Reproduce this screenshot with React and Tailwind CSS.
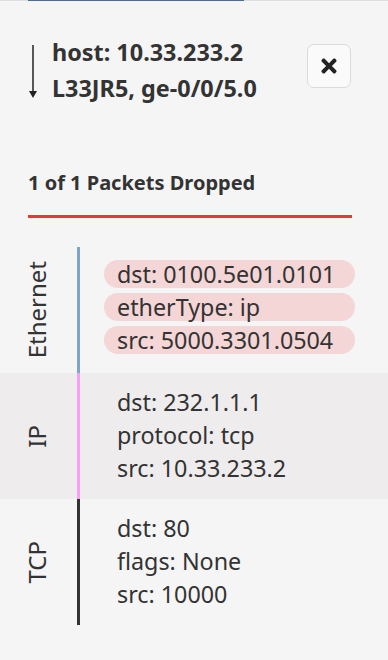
import React from "react";
import { FaTimes } from "react-icons/fa";

function Section({ label, barColor, bg, children, pad = "pl-[37px]" }) {
  return (
    <div className={`flex h-[126px] ${bg}`}>
      <div className="w-[77px] flex items-center justify-center pr-[4px]">
        <span className="[writing-mode:vertical-rl] rotate-180 text-[24px] leading-none text-[#333]">
          {label}
        </span>
      </div>
      <div className={`w-[3px] ${barColor}`} />
      <div className={`flex-1 pt-[13px] ${pad}`}>{children}</div>
    </div>
  );
}

export default function App() {
  return (
    <div
      className="w-[388px] min-h-[660px] bg-[#f5f5f5] text-[#333]"
      style={{ fontFamily: '"Noto Sans", "Open Sans", sans-serif' }}
    >
      <div className="h-[1px] bg-[#dedede] flex">
        <div className="ml-[28px] w-[216px] h-[1px] bg-[#4d6b97]" />
      </div>

      <div className="flex justify-between pl-[28px] pr-[37px] pt-[33px]">
        <div className="flex">
          <svg width="10" height="54" viewBox="0 0 10 54" className="mt-[11px]">
            <line x1="5" y1="0" x2="5" y2="48" stroke="#222" strokeWidth="1.5" />
            <path d="M1 46 L9 46 L5 53 Z" fill="#222" />
          </svg>
          <div className="ml-[14px] text-[23.4px] font-bold leading-[36px]">
            <div>host: 10.33.233.2</div>
            <div>L33JR5, ge-0/0/5.0</div>
          </div>
        </div>
        <button className="mt-[10px] w-[44px] h-[44px] rounded-[7px] border border-[#dadada] bg-[#fafafa] flex items-center justify-center text-[#222]">
          <FaTimes size={22} />
        </button>
      </div>

      <div className="px-[28px] mt-[63px]">
        <div className="text-[20px] font-bold leading-[28px]">1 of 1 Packets Dropped</div>
        <div className="mt-[18px] w-[324px] h-[3px] bg-[#e53a2f]" />
      </div>

      <div className="mt-[29px]">
        <Section label="Ethernet" barColor="bg-[#7fa3c9]" bg="bg-[#f5f5f5]" pad="pl-[24px]">
          <div className="flex flex-col gap-[5px] w-[251px]">
            {["dst: 0100.5e01.0101", "etherType: ip", "src: 5000.3301.0504"].map((t) => (
              <div key={t} className="rounded-full bg-[#f4d6d6] px-[13px] text-[23.3px] leading-[28px]">
                {t}
              </div>
            ))}
          </div>
        </Section>
        <Section label="IP" barColor="bg-[#f5a0f2]" bg="bg-[#eeeced]">
          <div className="text-[23.3px] leading-[33px]">
            <div>dst: 232.1.1.1</div>
            <div>protocol: tcp</div>
            <div>src: 10.33.233.2</div>
          </div>
        </Section>
        <Section label="TCP" barColor="bg-[#333333]" bg="bg-[#f5f5f5]">
          <div className="text-[23.3px] leading-[33px]">
            <div>dst: 80</div>
            <div>flags: None</div>
            <div>src: 10000</div>
          </div>
        </Section>
      </div>
    </div>
  );
}
